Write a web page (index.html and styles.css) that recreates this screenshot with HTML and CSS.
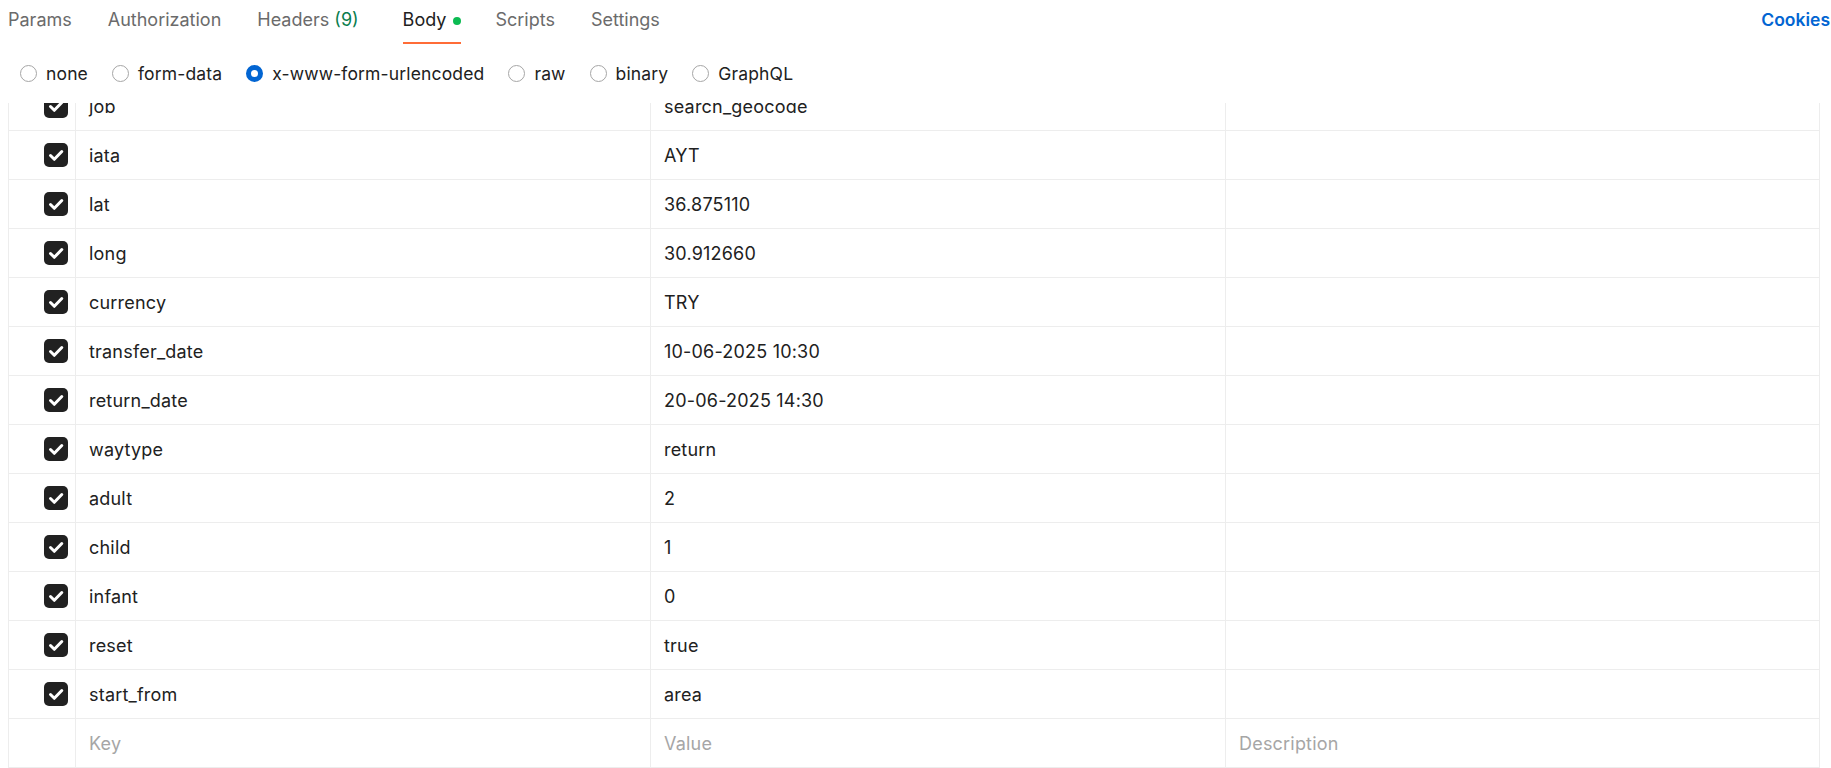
FILE: index.html
```html
<!DOCTYPE html>
<html>
<head>
<meta charset="utf-8">
<link rel="stylesheet" href="styles.css">
</head>
<body>
<div class="page">
  <div class="tabbar">
    <div class="tabs">
      <div class="tab">Params</div>
      <div class="tab">Authorization</div>
      <div class="tab">Headers <span class="count">(9)</span></div>
      <div class="tab active">Body <span class="dot"></span></div>
      <div class="tab">Scripts</div>
      <div class="tab">Settings</div>
    </div>
    <div class="cookies">Cookies</div>
  </div>
  <div class="radios">
    <label class="radio"><span class="circle"></span>none</label>
    <label class="radio"><span class="circle"></span>form-data</label>
    <label class="radio"><span class="circle on"></span>x-www-form-urlencoded</label>
    <label class="radio"><span class="circle"></span>raw</label>
    <label class="radio"><span class="circle"></span>binary</label>
    <label class="radio"><span class="circle"></span>GraphQL</label>
  </div>
  <div class="viewport">
    <div class="table">
      <div class="row"><div class="cell chk"><span class="box"><svg viewBox="0 0 24 24"><path d="M6.5 12.5l3.8 3.8 7.5-7.8"/></svg></span></div><div class="cell">job</div><div class="cell">search_geocode</div><div class="cell"></div></div>
      <div class="row"><div class="cell chk"><span class="box"><svg viewBox="0 0 24 24"><path d="M6.5 12.5l3.8 3.8 7.5-7.8"/></svg></span></div><div class="cell">iata</div><div class="cell">AYT</div><div class="cell"></div></div>
      <div class="row"><div class="cell chk"><span class="box"><svg viewBox="0 0 24 24"><path d="M6.5 12.5l3.8 3.8 7.5-7.8"/></svg></span></div><div class="cell">lat</div><div class="cell">36.875110</div><div class="cell"></div></div>
      <div class="row"><div class="cell chk"><span class="box"><svg viewBox="0 0 24 24"><path d="M6.5 12.5l3.8 3.8 7.5-7.8"/></svg></span></div><div class="cell">long</div><div class="cell">30.912660</div><div class="cell"></div></div>
      <div class="row"><div class="cell chk"><span class="box"><svg viewBox="0 0 24 24"><path d="M6.5 12.5l3.8 3.8 7.5-7.8"/></svg></span></div><div class="cell">currency</div><div class="cell">TRY</div><div class="cell"></div></div>
      <div class="row"><div class="cell chk"><span class="box"><svg viewBox="0 0 24 24"><path d="M6.5 12.5l3.8 3.8 7.5-7.8"/></svg></span></div><div class="cell">transfer_date</div><div class="cell">10-06-2025 10:30</div><div class="cell"></div></div>
      <div class="row"><div class="cell chk"><span class="box"><svg viewBox="0 0 24 24"><path d="M6.5 12.5l3.8 3.8 7.5-7.8"/></svg></span></div><div class="cell">return_date</div><div class="cell">20-06-2025 14:30</div><div class="cell"></div></div>
      <div class="row"><div class="cell chk"><span class="box"><svg viewBox="0 0 24 24"><path d="M6.5 12.5l3.8 3.8 7.5-7.8"/></svg></span></div><div class="cell">waytype</div><div class="cell">return</div><div class="cell"></div></div>
      <div class="row"><div class="cell chk"><span class="box"><svg viewBox="0 0 24 24"><path d="M6.5 12.5l3.8 3.8 7.5-7.8"/></svg></span></div><div class="cell">adult</div><div class="cell">2</div><div class="cell"></div></div>
      <div class="row"><div class="cell chk"><span class="box"><svg viewBox="0 0 24 24"><path d="M6.5 12.5l3.8 3.8 7.5-7.8"/></svg></span></div><div class="cell">child</div><div class="cell">1</div><div class="cell"></div></div>
      <div class="row"><div class="cell chk"><span class="box"><svg viewBox="0 0 24 24"><path d="M6.5 12.5l3.8 3.8 7.5-7.8"/></svg></span></div><div class="cell">infant</div><div class="cell">0</div><div class="cell"></div></div>
      <div class="row"><div class="cell chk"><span class="box"><svg viewBox="0 0 24 24"><path d="M6.5 12.5l3.8 3.8 7.5-7.8"/></svg></span></div><div class="cell">reset</div><div class="cell">true</div><div class="cell"></div></div>
      <div class="row"><div class="cell chk"><span class="box"><svg viewBox="0 0 24 24"><path d="M6.5 12.5l3.8 3.8 7.5-7.8"/></svg></span></div><div class="cell">start_from</div><div class="cell">area</div><div class="cell"></div></div>
      <div class="row"><div class="cell chk"></div><div class="cell ph">Key</div><div class="cell ph">Value</div><div class="cell ph">Description</div></div>
    </div>
  </div>
</div>
</body>
</html>
```
FILE: styles.css
```css
* { box-sizing: border-box; }
html, body { margin: 0; padding: 0; background: #fff; }
body {
  font-family: Inter, "Noto Sans", sans-serif;
  font-size: 18px;
  color: #212121;
  overflow: hidden;
}
.page {
  width: 1831px;
  height: 768px;
  display: flex;
  flex-direction: column;
}
.tabbar {
  display: flex;
  justify-content: space-between;
  align-items: flex-start;
  height: 44px;
  padding-left: 8px;
  flex: none;
}
.tabs { display: flex; gap: 36px; }
.tab {
  color: #6b6b6b;
  line-height: 22px;
  padding-top: 9px;
  height: 44px;
  border-bottom: 2px solid transparent;
  display: flex;
  align-items: flex-start;
  white-space: pre;
}
.tab .count { color: #0a7d4e; }
.tab.active {
  color: #212121;
  border-bottom-color: #ff6c37;
  margin-left: 8px;
  margin-right: -2px;
}
.dot {
  width: 8px;
  height: 8px;
  border-radius: 50%;
  background: #0cbb52;
  margin-top: 8px;
  margin-left: 2px;
}
.cookies {
  color: #0265d2;
  font-weight: 600;
  font-size: 17.5px;
  line-height: 22px;
  padding-top: 9px;
  padding-right: 1px;
}
.radios {
  height: 59px;
  flex: none;
  display: flex;
  align-items: center;
  padding-left: 20px;
  gap: 24px;
  font-size: 17.5px;
  letter-spacing: 0.15px;
}
.radio {
  display: flex;
  align-items: center;
  gap: 9px;
  line-height: 22px;
  color: #212121;
}
.circle {
  width: 17px;
  height: 17px;
  border-radius: 50%;
  border: 1px solid #a6a6a6;
  background: #fff;
}
.circle.on {
  border: 5px solid #0265d2;
}
.viewport {
  flex: 1;
  overflow: hidden;
  padding-left: 8px;
  padding-right: 11px;
}
.table {
  margin-top: -21px;
  border-left: 1px solid #ededed;
  border-right: 1px solid #ededed;
  letter-spacing: 0.2px;
}
.row {
  display: grid;
  grid-template-columns: 67px 575px 575px 1fr;
  height: 49px;
  border-bottom: 1px solid #ededed;
}
.cell {
  display: flex;
  align-items: center;
  padding-left: 13px;
  border-right: 1px solid #ededed;
  white-space: nowrap;
}
.cell:last-child { border-right: none; }
.cell.chk { justify-content: flex-end; padding-left: 0; padding-right: 7px; }
.cell.ph { color: #a6a6a6; }
.box {
  width: 24px;
  height: 24px;
  border-radius: 5px;
  background: #212121;
  display: flex;
}
.box svg {
  width: 24px;
  height: 24px;
  fill: none;
  stroke: #fff;
  stroke-width: 3;
  stroke-linecap: round;
  stroke-linejoin: round;
}
```
